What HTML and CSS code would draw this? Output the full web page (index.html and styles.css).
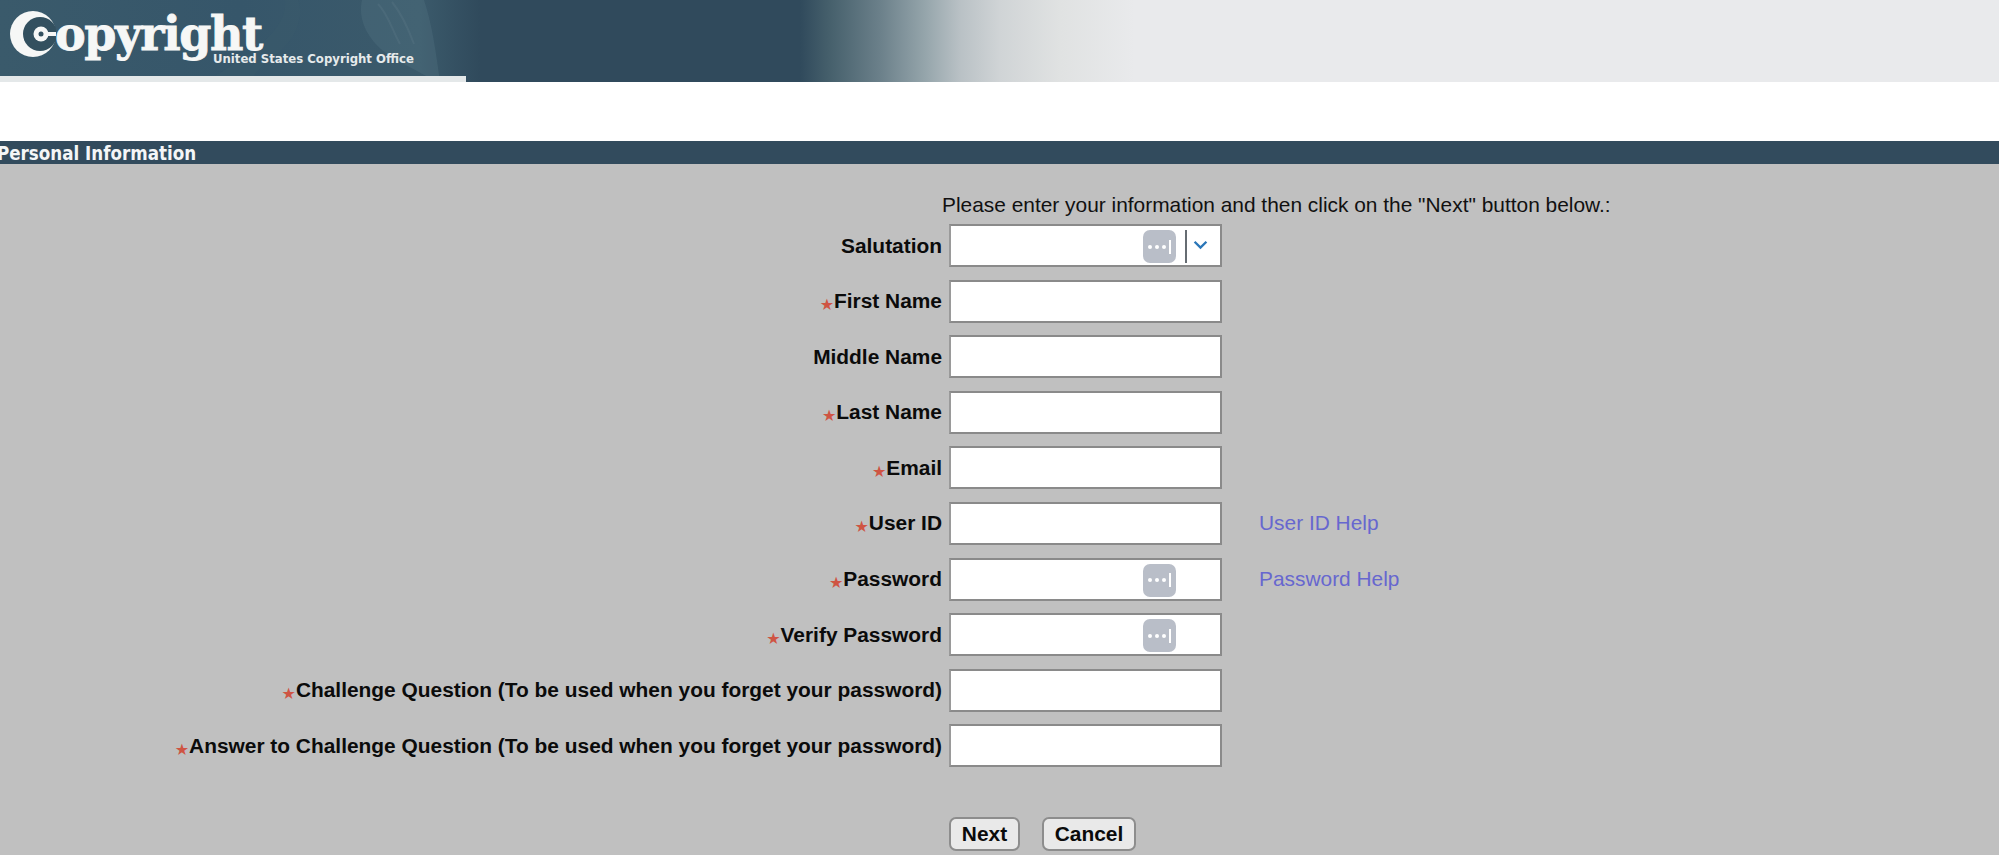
FILE: index.html
```html
<!DOCTYPE html>
<html lang="en">
<head>
<meta charset="utf-8">
<title>Personal Information</title>
<link rel="stylesheet" href="styles.css">
</head>
<body>
<header class="banner">
  <svg class="statue" viewBox="0 0 466 82" aria-hidden="true">
    <path d="M250 82C262 60 285 54 296 30C302 14 300 6 298 0H285C288 20 270 40 240 60C225 70 215 76 205 82Z" fill="#42616f" opacity=".22"/>
    <path d="M362 0C358 18 366 36 382 50C400 64 418 70 436 82H440C436 52 432 24 424 0Z" fill="#5b7a88" opacity=".28"/>
    <path d="M378 4C388 14 392 30 400 44M392 2C402 14 408 28 414 44" fill="none" stroke="#7c97a2" stroke-width="2" opacity=".14"/>
  </svg>
  <svg class="logo-c" viewBox="0 0 46 46" aria-hidden="true">
    <circle cx="23" cy="23" r="23" fill="#f6f7f6"/>
    <circle cx="30" cy="23" r="17" fill="#33505f"/>
    <path d="M28 21H46V25H28Z" fill="#f6f7f6"/>
    <circle cx="31" cy="23" r="7.500" fill="#f6f7f6"/>
    <circle cx="31" cy="23" r="2.500" fill="#33505f"/>
  </svg>
  <span class="logo-word">opyright</span>
  <span class="logo-sub">United States Copyright Office</span>
  <div class="banner-strip"></div>
</header>
<div class="spacer"></div>
<h1 class="section-bar">Personal Information</h1>
<main class="panel">
  <p class="intro">Please enter your information and then click on the "Next" button below.:</p>
  <form class="fields">
    <label class="field-label">Salutation</label>
    <div class="input">
      <span class="key-icon"><i></i><i></i><i></i><b></b></span>
      <span class="divider"></span>
      <svg class="chevron" viewBox="0 0 14 9" aria-hidden="true"><path d="M1.500 1.500L7 7L12.500 1.500" fill="none" stroke="#2a76b8" stroke-width="2.200"/></svg>
    </div>
    <span></span>

    <label class="field-label"><span class="star">★</span>First Name</label>
    <div class="input"></div>
    <span></span>

    <label class="field-label">Middle Name</label>
    <div class="input"></div>
    <span></span>

    <label class="field-label"><span class="star">★</span>Last Name</label>
    <div class="input"></div>
    <span></span>

    <label class="field-label"><span class="star">★</span>Email</label>
    <div class="input"></div>
    <span></span>

    <label class="field-label"><span class="star">★</span>User ID</label>
    <div class="input"></div>
    <a class="help" href="#">User ID Help</a>

    <label class="field-label"><span class="star">★</span>Password</label>
    <div class="input"><span class="key-icon"><i></i><i></i><i></i><b></b></span></div>
    <a class="help" href="#">Password Help</a>

    <label class="field-label"><span class="star">★</span>Verify Password</label>
    <div class="input"><span class="key-icon"><i></i><i></i><i></i><b></b></span></div>
    <span></span>

    <label class="field-label"><span class="star">★</span>Challenge Question (To be used when you forget your password)</label>
    <div class="input"></div>
    <span></span>

    <label class="field-label"><span class="star">★</span>Answer to Challenge Question (To be used when you forget your password)</label>
    <div class="input"></div>
    <span></span>
  </form>
  <div class="actions">
    <button class="btn btn-next" type="button">Next</button>
    <button class="btn btn-cancel" type="button">Cancel</button>
  </div>
</main>
</body>
</html>
```
FILE: styles.css
```css
* { box-sizing: border-box; }
html, body { margin: 0; height: 855px; overflow: hidden; background: #fff; }
body { font-family: "Liberation Sans", Arial, sans-serif; color: #0b0b0b; }

.banner {
  position: relative;
  height: 82px;
  overflow: hidden;
  background: linear-gradient(90deg,
    #3a5a6b 0, #36566a 240px, #3b5a6b 420px, #304a5c 480px, #304a5c 800px,
    #46606c 830px, #6b808a 880px, #95a5ab 925px, #b9c1c5 960px, #d0d4d6 1000px,
    #e0e2e2 1060px, #e9eaec 1135px, #e9eaec 100%);
}
.statue { position: absolute; left: 0; top: 0; width: 466px; height: 82px; }
.logo-c { position: absolute; left: 10px; top: 11px; width: 46px; height: 46px; }
.logo-word {
  position: absolute; left: 55px; top: 15px;
  font: 700 46px/38px "DejaVu Serif", serif;
  letter-spacing: -1.400px;
  -webkit-text-stroke: .8px #f6f7f6;
  color: #f6f7f6;
}
.logo-sub {
  position: absolute; left: 213px; top: 52px;
  font: 700 13px/14px "DejaVu Sans Condensed", "DejaVu Sans", sans-serif;
  font-stretch: condensed;
  color: #e6eaeb;
}
.banner-strip {
  position: absolute; left: 0; bottom: 0;
  width: 466px; height: 6px;
  background: #e4e8e9;
}
.spacer { height: 59px; }
.section-bar {
  margin: 0; height: 23px; padding-left: 0;
  background: #324b5d;
  color: #f4f6f7;
  font: 700 18.600px/25px "DejaVu Sans Condensed", "DejaVu Sans", sans-serif;
  font-stretch: condensed;
  text-indent: -3px;
  white-space: nowrap;
}
.panel { height: 691px; background: #c0c0c0; padding-top: 29px; }
.intro {
  margin: 0 0 8px 942px;
  font-size: 20.900px; line-height: 23px;
  color: #111;
  white-space: nowrap;
  height: 23px;
}
.fields {
  display: grid;
  grid-template-columns: 942px 273px 1fr;
  grid-auto-rows: 43px;
  row-gap: 12.600px;
  column-gap: 7px;
  align-items: center;
}
.field-label {
  text-align: right;
  font-size: 20.900px; font-weight: 700;
  white-space: nowrap;
}
.star { color: #cf5443; font-size: 16px; font-weight: 400; vertical-align: -2px; line-height: 1; font-family: "DejaVu Sans", sans-serif; }
.input {
  position: relative;
  height: 43px;
  background: #fff;
  border: 2px solid #8a8a8a;
  border-left-color: #9a9a9a;
}
.key-icon {
  position: absolute; left: 192px; top: 4px;
  width: 33px; height: 33px;
  border-radius: 7px;
  background: #b9bec8;
  display: flex; align-items: center; justify-content: center; gap: 3px;
}
.key-icon i { width: 4px; height: 4px; border-radius: 50%; background: #fff; }
.key-icon b { width: 2px; height: 14px; background: #fff; }
.divider {
  position: absolute; left: 234px; top: 4px;
  width: 2px; height: 33px;
  background: #666c72;
}
.chevron { position: absolute; left: 242px; top: 14px; width: 15px; height: 10px; }
.help {
  margin-left: 30px;
  font-size: 20.900px;
  color: #6767cf;
  text-decoration: none;
}
.actions { display: flex; gap: 22px; margin: 50px 0 0 949px; }
.btn {
  height: 34px;
  padding: 0;
  background: #e9e9e9;
  border: 2px solid #8d8d8d;
  border-radius: 7px;
  font: 700 20.900px/1 "Liberation Sans", Arial, sans-serif;
  color: #0b0b0b;
}
.btn-next { width: 71px; }
.btn-cancel { width: 94px; }
```
